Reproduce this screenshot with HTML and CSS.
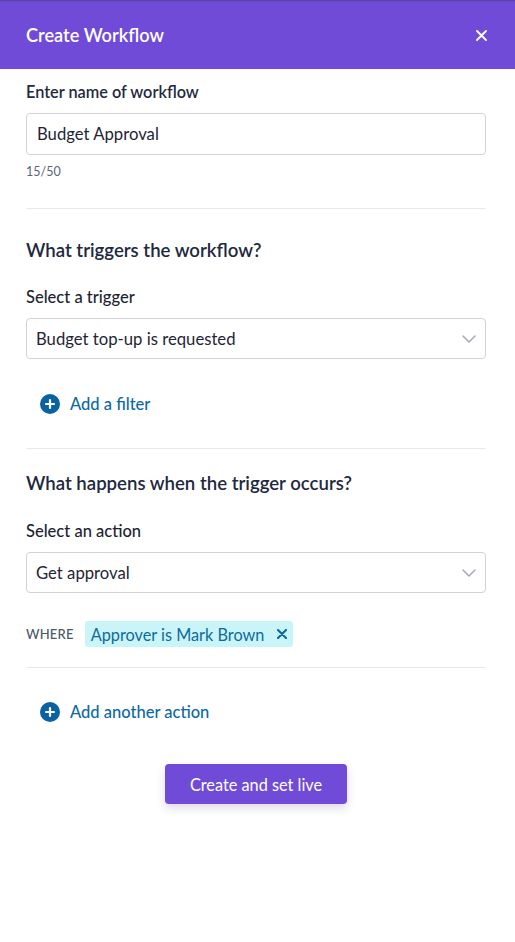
FILE: index.html
```html
<!DOCTYPE html>
<html>
<head>
<meta charset="utf-8">
<link rel="stylesheet" href="styles.css">
</head>
<body>
<div class="panel">
  <header class="header">
    <h1 class="title">Create Workflow</h1>
    <button class="close" aria-label="Close">
      <svg width="11" height="11" viewBox="0 0 11 11"><path d="M1 1L10 10M10 1L1 10" stroke="#fff" stroke-width="1.8" stroke-linecap="round"/></svg>
    </button>
  </header>
  <main class="content">
    <label class="label first">Enter name of workflow</label>
    <div class="field"><span class="field-text">Budget Approval</span></div>
    <div class="counter">15/50</div>
    <hr class="divider d1">

    <h2 class="heading h1">What triggers the workflow?</h2>
    <label class="label sub">Select a trigger</label>
    <div class="field select"><span class="select-text">Budget top-up is requested</span>
      <svg class="chev" width="14" height="8" viewBox="0 0 14 8"><path d="M1 1L7 7L13 1" fill="none" stroke="#a3aab3" stroke-width="1.5" stroke-linecap="round" stroke-linejoin="round"/></svg>
    </div>
    <div class="add-row r1">
      <svg class="plus" width="20" height="20" viewBox="0 0 20 20"><circle cx="10" cy="10" r="10" fill="#0a62a0"/><path d="M10 6V14M6 10H14" stroke="#fff" stroke-width="2.2" stroke-linecap="round"/></svg>
      <span class="add-text">Add a filter</span>
    </div>
    <hr class="divider d2">

    <h2 class="heading h2">What happens when the trigger occurs?</h2>
    <label class="label sub s2">Select an action</label>
    <div class="field select"><span class="select-text">Get approval</span>
      <svg class="chev" width="14" height="8" viewBox="0 0 14 8"><path d="M1 1L7 7L13 1" fill="none" stroke="#a3aab3" stroke-width="1.5" stroke-linecap="round" stroke-linejoin="round"/></svg>
    </div>
    <div class="where-row">
      <span class="where">WHERE</span>
      <span class="chip">Approver is Mark Brown
        <svg class="chip-x" width="10" height="10" viewBox="0 0 10 10"><path d="M1 1L9 9M9 1L1 9" stroke="#0f6b9c" stroke-width="2.2" stroke-linecap="round"/></svg>
      </span>
    </div>
    <hr class="divider d3">

    <div class="add-row r2">
      <svg class="plus" width="20" height="20" viewBox="0 0 20 20"><circle cx="10" cy="10" r="10" fill="#0a62a0"/><path d="M10 6V14M6 10H14" stroke="#fff" stroke-width="2.2" stroke-linecap="round"/></svg>
      <span class="add-text">Add another action</span>
    </div>
    <div class="actions">
      <button class="primary">Create and set live</button>
    </div>
  </main>
</div>
</body>
</html>
```

FILE: styles.css
```css
* { box-sizing: border-box; }
html, body { margin: 0; padding: 0; background: #fff; }
body {
  font-family: Lato, "Noto Sans", sans-serif;
  color: #1f2940;
  width: 515px;
  height: 942px;
}
.header {
  height: 69px;
  background: #6f4bd8;
  border-top: 1px solid #55479a;
  display: flex;
  align-items: center;
  justify-content: space-between;
  padding: 0 26px 0 26px;
}
.title {
  margin: 0;
  font-size: 18.2px;
  font-weight: 600;
  color: #fff;
  line-height: 24px;
}
.close {
  background: none;
  border: 0;
  padding: 0;
  margin-right: 2px;
  display: flex;
  cursor: pointer;
}
.content {
  padding: 13px 29px 0 26px;
  display: flex;
  flex-direction: column;
}
.label {
  display: block;
  font-size: 16.3px;
  font-weight: 600;
  line-height: 20px;
  color: #1f2940;
}
.label.first { margin-top: 0; }
.label.sub { margin-top: 25px; font-weight: 500; font-size: 16.5px; color: #1c2333; }
.label.s2 { margin-top: 26px; }
.field {
  margin-top: 11px;
  height: 42px;
  border: 1px solid #cfd3d9;
  border-radius: 4px;
  display: flex;
  align-items: center;
  padding: 0 10px;
  font-size: 16.7px;
  color: #1f2535;
}
.field.select {
  height: 41px;
  padding: 0 9px 0 9px;
  justify-content: space-between;
}
.counter {
  margin-top: 9px;
  font-size: 12.5px;
  line-height: 16px;
  color: #5c6573;
}
.divider {
  border: 0;
  height: 1px;
  background: #e7e8eb;
  margin: 0;
}
.d1 { margin-top: 28px; }
.heading {
  margin: 0;
  font-size: 18.6px;
  font-weight: 600;
  line-height: 24px;
  color: #1f2940;
}
.heading.h1 { margin-top: 29px; }
.heading.h2 { margin-top: 22px; }
.add-row {
  display: flex;
  align-items: center;
  gap: 10px;
  padding-left: 14px;
  height: 24px;
}
.r1 { margin-top: 33px; }
.d2 { margin-top: 32px; }
.add-text {
  font-size: 16.5px;
  font-weight: 500;
  color: #0c69a1;
}
.where-row {
  margin-top: 28px;
  display: flex;
  align-items: center;
  gap: 11px;
}
.where {
  font-size: 13px;
  font-weight: 500;
  color: #4d5866;
  letter-spacing: 0.2px;
}
.chip {
  display: inline-flex;
  align-items: center;
  height: 26px;
  padding: 0 6px 0 6px;
  background: #c9f5f8;
  border-radius: 3px;
  font-size: 16.3px;
  color: #0f6b9c;
  gap: 13px;
}
.d3 { margin-top: 20px; }
.r2 { margin-top: 32px; }
.actions {
  display: flex;
  justify-content: center;
  margin-top: 40px;
}
.primary {
  width: 182px;
  height: 40px;
  border: 0;
  border-radius: 4px;
  background: #6f4bd8;
  color: #fff;
  font-family: Lato, "Noto Sans", sans-serif;
  font-size: 16.3px;
  box-shadow: 0 4px 10px rgba(60, 40, 120, 0.18);
  cursor: pointer;
}
```
